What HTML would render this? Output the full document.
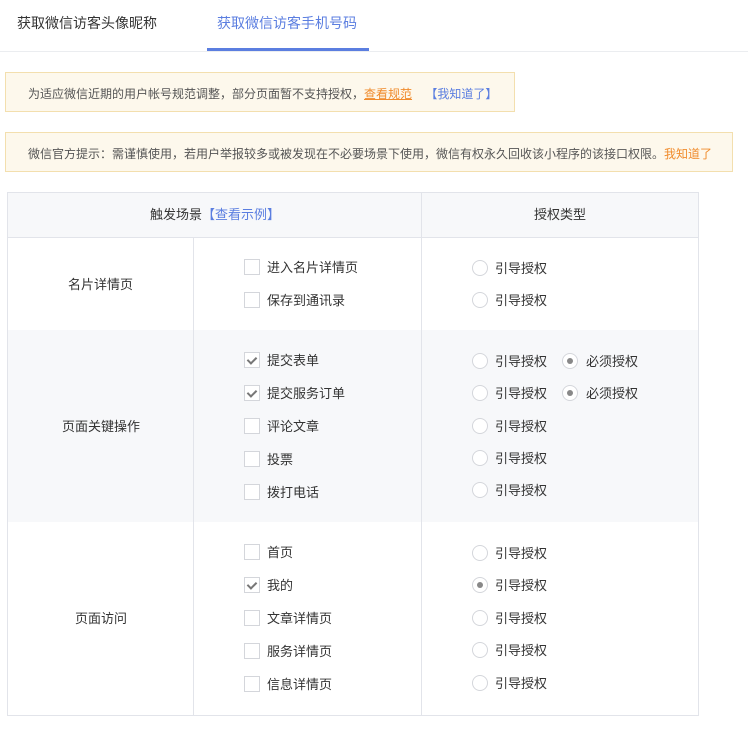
<!DOCTYPE html>
<html><head><meta charset="utf-8">
<style>
*{margin:0;padding:0;box-sizing:border-box}
body{width:748px;height:733px;background:#fff;font-family:"Liberation Sans","Noto Sans CJK SC",sans-serif;font-size:13px;color:#333;position:relative;overflow:hidden}
.a{position:absolute;white-space:nowrap}
.cb{position:absolute;width:16px;height:16px;border:1px solid #d4d6db;background:#fff}
.cb.on::after{content:"";position:absolute;left:4px;top:2px;width:4px;height:7px;border:solid #777;border-width:0 2px 2px 0;transform:rotate(45deg)}
.rd{position:absolute;width:16px;height:16px;border:1px solid #d4d6db;border-radius:50%;background:#fff}
.rd.on::after{content:"";position:absolute;left:4px;top:4px;width:6px;height:6px;border-radius:50%;background:#888}
.t{position:absolute;line-height:16px;white-space:nowrap}
</style></head><body>
<div class="a" style="left:17px;top:13px;font-size:14px;color:#333">获取微信访客头像昵称</div>
<div class="a" style="left:217px;top:13px;font-size:14px;color:#5b7ee0">获取微信访客手机号码</div>
<div class="a" style="left:0;top:51px;width:748px;height:1px;background:#ebedf0"></div>
<div class="a" style="left:207px;top:48px;width:162px;height:3px;background:#5b7ee0"></div>

<div class="a" style="left:5px;top:72px;width:510px;height:40px;background:#fdf8ec;border:1px solid #f3dfae"></div>
<div class="a" style="left:28px;top:85px;font-size:12px;color:#555">为适应微信近期的用户帐号规范调整，部分页面暂不支持授权，<span style="color:#f08b2c;text-decoration:underline">查看规范</span>&nbsp;&nbsp;&nbsp;&nbsp;<span style="color:#5b7ee0">【我知道了】</span></div>

<div class="a" style="left:5px;top:132px;width:728px;height:40px;background:#fdf8ec;border:1px solid #f3dfae"></div>
<div class="a" style="left:28px;top:145px;font-size:12px;color:#555">微信官方提示：需谨慎使用，若用户举报较多或被发现在不必要场景下使用，微信有权永久回收该小程序的该接口权限。<span style="color:#f08b2c">我知道了</span></div>

<div class="a" style="left:7px;top:192px;width:692px;height:524px;border:1px solid #e2e4ea"></div>
<div class="a" style="left:8px;top:193px;width:690px;height:44px;background:#f7f8fa"></div>
<div class="a" style="left:8px;top:330px;width:690px;height:192px;background:#f7f8fa"></div>
<div class="a" style="left:8px;top:237px;width:690px;height:1px;background:#e2e4ea"></div>
<div class="a" style="left:193px;top:237px;width:1px;height:478px;background:#e2e4ea"></div>
<div class="a" style="left:421px;top:193px;width:1px;height:522px;background:#e2e4ea"></div>

<div class="t" style="left:150px;top:207px">触发场景<span style="color:#5b7ee0">【查看示例】</span></div>
<div class="t" style="left:534px;top:207px">授权类型</div>

<div class="t" style="left:68px;top:277px">名片详情页</div>
<div class="t" style="left:62px;top:419px">页面关键操作</div>
<div class="t" style="left:75px;top:611px">页面访问</div>

<div class="cb" style="left:244px;top:259px"></div><div class="t" style="left:267px;top:260px">进入名片详情页</div>
<div class="cb" style="left:244px;top:292px"></div><div class="t" style="left:267px;top:293px">保存到通讯录</div>
<div class="rd" style="left:472px;top:260px"></div><div class="t" style="left:495px;top:261px">引导授权</div>
<div class="rd" style="left:472px;top:292px"></div><div class="t" style="left:495px;top:293px">引导授权</div>

<div class="cb on" style="left:244px;top:352px"></div><div class="t" style="left:267px;top:353px">提交表单</div>
<div class="cb on" style="left:244px;top:385px"></div><div class="t" style="left:267px;top:386px">提交服务订单</div>
<div class="cb" style="left:244px;top:418px"></div><div class="t" style="left:267px;top:419px">评论文章</div>
<div class="cb" style="left:244px;top:451px"></div><div class="t" style="left:267px;top:452px">投票</div>
<div class="cb" style="left:244px;top:484px"></div><div class="t" style="left:267px;top:485px">拨打电话</div>
<div class="rd" style="left:472px;top:353px"></div><div class="t" style="left:495px;top:354px">引导授权</div>
<div class="rd on" style="left:562px;top:353px"></div><div class="t" style="left:586px;top:354px">必须授权</div>
<div class="rd" style="left:472px;top:385px"></div><div class="t" style="left:495px;top:386px">引导授权</div>
<div class="rd on" style="left:562px;top:385px"></div><div class="t" style="left:586px;top:386px">必须授权</div>
<div class="rd" style="left:472px;top:418px"></div><div class="t" style="left:495px;top:419px">引导授权</div>
<div class="rd" style="left:472px;top:450px"></div><div class="t" style="left:495px;top:451px">引导授权</div>
<div class="rd" style="left:472px;top:482px"></div><div class="t" style="left:495px;top:483px">引导授权</div>

<div class="cb" style="left:244px;top:544px"></div><div class="t" style="left:267px;top:545px">首页</div>
<div class="cb on" style="left:244px;top:577px"></div><div class="t" style="left:267px;top:578px">我的</div>
<div class="cb" style="left:244px;top:610px"></div><div class="t" style="left:267px;top:611px">文章详情页</div>
<div class="cb" style="left:244px;top:643px"></div><div class="t" style="left:267px;top:644px">服务详情页</div>
<div class="cb" style="left:244px;top:676px"></div><div class="t" style="left:267px;top:677px">信息详情页</div>
<div class="rd" style="left:472px;top:545px"></div><div class="t" style="left:495px;top:546px">引导授权</div>
<div class="rd on" style="left:472px;top:577px"></div><div class="t" style="left:495px;top:578px">引导授权</div>
<div class="rd" style="left:472px;top:610px"></div><div class="t" style="left:495px;top:611px">引导授权</div>
<div class="rd" style="left:472px;top:642px"></div><div class="t" style="left:495px;top:643px">引导授权</div>
<div class="rd" style="left:472px;top:675px"></div><div class="t" style="left:495px;top:676px">引导授权</div>
</body></html>
